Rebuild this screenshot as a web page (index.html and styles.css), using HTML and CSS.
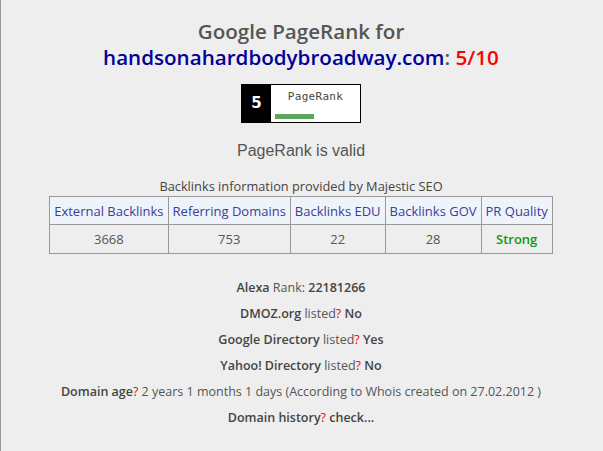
FILE: index.html
```html
<!DOCTYPE html>
<html lang="en">
<head>
  <meta charset="UTF-8" />
  <title>Google PageRank</title>
  <link rel="stylesheet" href="styles.css">
</head>
<body>
  <div class="page">
    <h1 class="title">Google PageRank for<br><span class="domain">handsonahardbodybroadway.com</span>: <span class="rank">5/10</span></h1>

    <div class="badge">
      <div class="badge-num">5</div>
      <div class="badge-body">
        <div class="badge-label">PageRank</div>
        <div class="badge-bar"></div>
      </div>
    </div>

    <p class="valid">PageRank is valid</p>

    <p class="provided">Backlinks information provided by Majestic SEO</p>
    <table class="links">
      <tr>
        <th>External Backlinks</th>
        <th>Referring Domains</th>
        <th>Backlinks EDU</th>
        <th>Backlinks GOV</th>
        <th>PR Quality</th>
      </tr>
      <tr>
        <td>3668</td>
        <td>753</td>
        <td>22</td>
        <td>28</td>
        <td class="strong">Strong</td>
      </tr>
    </table>

    <ul class="facts">
      <li><b>Alexa</b> Rank: <b>22181266</b></li>
      <li><b>DMOZ.org</b> listed<span class="q">?</span> <b>No</b></li>
      <li><b>Google Directory</b> listed<span class="q">?</span> <b>Yes</b></li>
      <li><b>Yahoo! Directory</b> listed<span class="q">?</span> <b>No</b></li>
      <li><b>Domain age</b><span class="q">?</span> 2 years 1 months 1 days (According to Whois created on 27.02.2012 )</li>
      <li><b>Domain history</b><span class="q">?</span> <b>check...</b></li>
    </ul>
  </div>
</body>
</html>
```

FILE: styles.css
```css
html, body {
  margin: 0;
  height: 100%;
}
body {
  background: #eeeeee;
  border-left: 1px solid #999;
  font-family: 'Open Sans', 'Noto Sans', sans-serif;
  color: #444;
}
.page {
  width: 600px;
  text-align: center;
  padding-top: 18px;
}
.title {
  margin: 0;
  font-size: 20.6px;
  font-weight: 600;
  line-height: 26px;
  color: #555;
}
.domain {
  color: #000099;
}
.rank {
  color: #ff0000;
}
.badge {
  display: flex;
  width: 118px;
  height: 37px;
  margin: 14px auto 0;
  border: 1px solid #000;
  background: #fff;
}
.badge-num {
  width: 29px;
  background: #000;
  color: #fff;
  font: bold 15px 'DejaVu Sans', sans-serif;
  line-height: 37px;
}
.badge-body {
  flex: 1;
  padding: 5px 4px 0;
  text-align: center;
}
.badge-label {
  font: 11px 'DejaVu Sans Mono', monospace;
  color: #444;
  letter-spacing: 0.3px;
}
.badge-bar {
  width: 39px;
  height: 5px;
  margin-top: 11px;
  background: #5ea85e;
}
.valid {
  margin: 19px 0 0;
  font: 16px 'Liberation Sans', sans-serif;
  color: #555;
}
.provided {
  margin: 17px 0 0;
  font-size: 12.8px;
  color: #444;
}
.links {
  margin: 1px auto 0;
  border-collapse: collapse;
  font-size: 13px;
}
.links th {
  height: 27px;
  padding: 0 4px;
  border: 1px solid #999;
  background: #eef4fa;
  color: #3c3c99;
  font-weight: 500;
}
.links td {
  height: 26px;
  border: 1px solid #999;
  color: #555;
}
.links .strong {
  color: #119911;
  font-weight: 600;
}
.facts {
  list-style: none;
  margin: 21px 0 0;
  padding: 0;
  font-size: 12.5px;
  color: #555;
}
.facts li {
  line-height: 26px;
}
.facts b {
  font-weight: 600;
  color: #444;
}
.q {
  color: #ff0000;
}
```
